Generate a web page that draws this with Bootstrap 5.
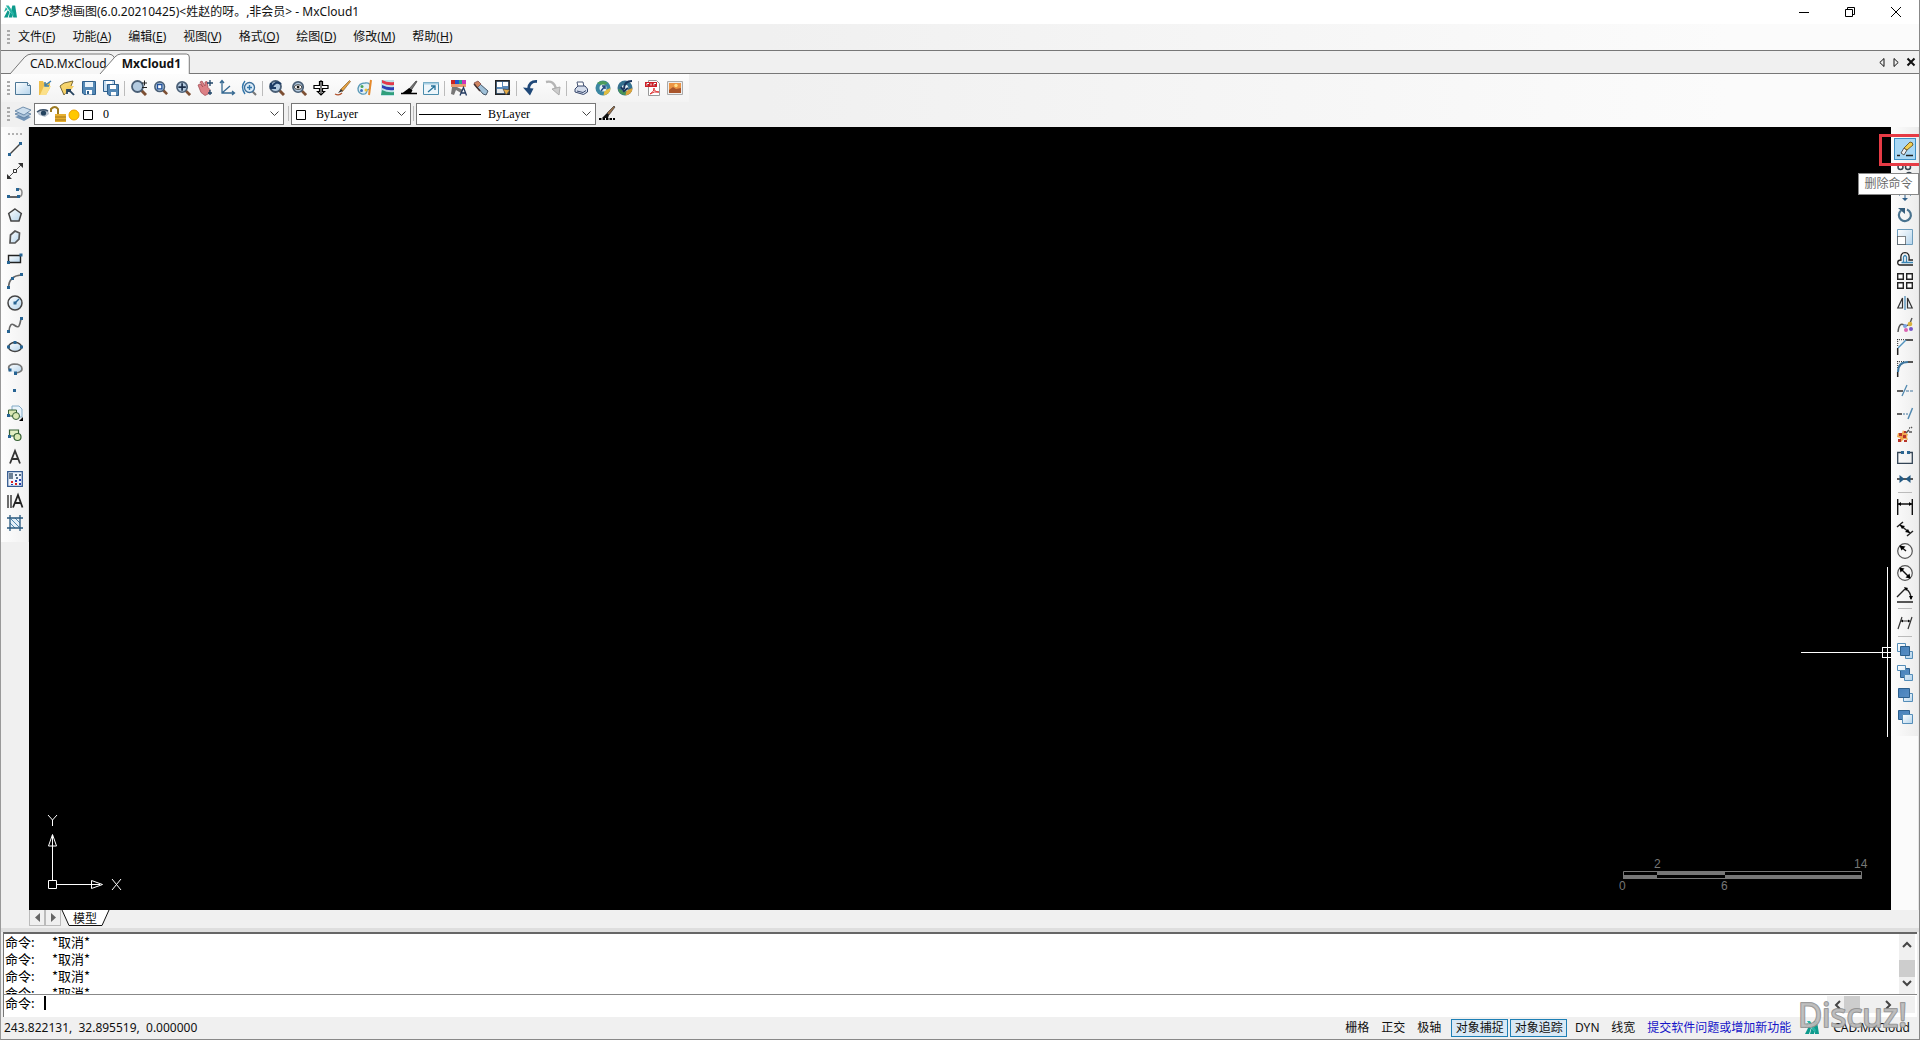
<!DOCTYPE html>
<html lang="zh-CN">
<head>
<meta charset="utf-8">
<meta name="viewport" content="width=device-width, initial-scale=1">
<title>CAD梦想画图 - MxCloud1</title>
<link href="https://cdn.jsdelivr.net/npm/bootstrap@5.3.0/dist/css/bootstrap.min.css" rel="stylesheet">
<style>
body{font:12px/16px "Noto Sans","Noto Sans CJK SC",sans-serif;color:#111;background:#f3f3f3}
button,select,input{font:inherit;color:inherit}
button{background:none;border:0;padding:0}
svg{display:block;flex:none;overflow:visible}
.app-shell{border-left:1px solid #999;border-right:1px solid #888;border-bottom:1px solid #888;background:#f0f0f0}
.title-row{height:24px;background:#fff;padding-left:3px}
.win-btn{width:46px;height:24px}
.menu-row{height:26px;background:linear-gradient(90deg,#f0f0f0,#f0f0f0 40%,#fbfbfb 90%);padding-left:6px}
.menu-row button{margin-right:17px;white-space:nowrap}
.grip-v{width:3px;height:14px;background:repeating-linear-gradient(#aaa 0 2px,transparent 2px 4px);flex:none}
.grip-h{width:14px;height:2px;background:repeating-linear-gradient(90deg,#b0b0b0 0 2px,transparent 2px 4px)}
.doc-row{height:24px;border-top:1px solid #777;border-bottom:1px solid #777;background:#f0f0f0;padding-left:9px}
.doc-tab{height:23px;padding:0 8px 0 20px;white-space:nowrap;line-height:25px}
.doc-tab svg{position:absolute;left:0;top:3px;width:100%;height:20px}
.doc-tab span{position:relative}
.doc-tab.front{margin-left:-15px;padding:0 8px 0 22px}
.bars{background:linear-gradient(90deg,#f0f0f0,#f0f0f0 40%,#fbfbfb 90%)}
.bar1{height:28px;width:688px;background:linear-gradient(#fdfdfd,#f3f3f3)}
.bar2{height:25px;padding-bottom:2px}
.bar1,.bar2{padding-left:6px}
.grip-v + .tool{margin-left:2px}
.tool{width:22px;height:22px;display:flex;align-items:center;justify-content:center;flex:none}
.split{width:1px;height:15px;margin:0 2px;background:#bbb;flex:none}
.bar1 .split{margin-right:3px}
.split-h{height:1px;width:14px;margin:2px 0 3px;background:#bbb}
.combo{height:22px;background:#fff;border:1px solid #777}
.combo select{appearance:none;width:100%;height:20px;border:0;background:none;font:12px/20px "Liberation Serif","Noto Sans CJK SC",serif;outline:0;padding:0;color:#000}
.combo .arrow{position:absolute;right:4px;top:7px;pointer-events:none}
.combo .deco{position:absolute;left:2px;top:2px;pointer-events:none}
.combo-layer{width:250px}.combo-layer select{padding-left:68px}
.combo-color{width:120px}.combo-color select{padding-left:24px}
.combo-line{width:180px}.combo-line select{padding-left:71px}
.dock{width:28px;background:linear-gradient(90deg,#fdfdfd,#f1f1f1);align-self:flex-start;padding:6px 0 8px}
.dock-left{border-right:1px solid #ddd}
.dock-left .grip-h{margin-bottom:3px}
.dock-col-r{width:28px;background:#fbfbfb;border-right:1px solid #e6e6e6}
.dock-r{width:27px;background:linear-gradient(90deg,#fdfdfd,#ededed);padding:11px 0 8px}
.tool.hot{background:#a9d8f5;outline:1px solid #3d8fc4;outline-offset:-1px}
.drawing{background:#000;overflow:hidden}
.ucs{position:absolute;left:18px;bottom:17px}
.ruler{position:absolute;right:20px;bottom:17px}
.cross{position:absolute;right:0;bottom:173px}
.model-row{height:18px;padding-left:28px}
.nav-sq{width:16px;height:16px;border:1px solid #bbb;border-top:0;display:flex;align-items:center;justify-content:center}
.model-tab{width:48px;height:16px;line-height:18px}
.model-tab svg{position:absolute;left:0;top:0}
.model-tab span{position:relative}
.bar-gap{height:4px;background:#dedede}
.console{margin:0 2px 0 2px;border:1px solid #777;border-top:2px solid #666;border-right:0;border-bottom:0;background:#fff;color:#000}
.console,.console input{font:13px/17px "Noto Sans CJK SC",sans-serif}
.console .log{height:61px;overflow:hidden;padding-left:1px;border-bottom:1px solid #888}
.console .log div{white-space:pre}
.log-text{margin-top:-1px}
.lab{display:inline-block;width:47px}
.entry{height:22px;padding-left:1px}
.entry label,.entry input{height:17px;line-height:15px}
.entry label{width:37px}
.entry input{border:0;outline:0;padding:0;background:none}
.caret{width:2px;height:14px;background:#000;margin:1px 0 0 2px}
.vscroll{width:16px;background:#f0f0f0;margin-right:2px}
.vscroll i{display:block;width:16px;height:17px;background:#cdcdcd}
.hscroll{width:88px;height:17px;background:#f0f0f0;margin:1px 2px 0 0}
.hscroll i{display:block;width:16px;height:17px;background:#cdcdcd}
.status{height:22px;padding:0 9px 0 3px;white-space:nowrap}
.mode{width:36px;height:18px;text-align:center}
.mode.on{width:57px;margin-right:2px;border:1px solid #1d7fb5;background:#d9e9f5}
.report{color:#1414c8;margin:0 12px 0 6px}
.stamp{position:absolute;right:14px;bottom:6px;pointer-events:none}
.frame-red{position:absolute;right:-3px;top:7px;width:43px;height:32px;border:3px solid #e63b45;pointer-events:none}
.tip{position:absolute;right:0;top:46px;width:61px;height:22px;background:#fff;border:1px solid #888;color:#6a6a6a;text-align:center;line-height:20px;white-space:nowrap;z-index:3}
</style>
<script src="https://cdn.jsdelivr.net/npm/bootstrap@5.3.0/dist/js/bootstrap.bundle.min.js"></script>
</head>
<body>
<svg width="0" height="0" class="position-absolute" aria-hidden="true">
<defs>
<linearGradient id="ice" x1="0" y1="0" x2="1" y2="1"><stop offset="0" stop-color="#fff"/><stop offset="1" stop-color="#b4d4ec"/></linearGradient>
<linearGradient id="sea" x1="0" y1="0" x2="1" y2="1"><stop offset="0" stop-color="#4580ba"/><stop offset="1" stop-color="#5a8fc4"/></linearGradient>
<symbol id="lens" viewBox="0 0 16 16"><path d="M10 10l5 5" stroke="#7d4f33" stroke-width="3"/><circle cx="6.500" cy="6.500" r="5.500" fill="#b4cbe0" stroke="#4a5f76" stroke-width="1.800"/></symbol>
<symbol id="logo" viewBox="0 0 14 14"><path d="M0 13L4 5l2 2-2 6zM5 13l1.500-6 2.500 3v3zM9 0h3l2 13h-4L8 4z" fill="#0e9a8c"/><path d="M2 0h3l6 9-1 3zM0 7l2-5 2 2z" fill="#25b3a4"/></symbol>
</defs>
</svg>
<div class="app-shell d-flex flex-column vh-100 position-relative overflow-hidden">
 <header class="title-row d-flex align-items-center flex-shrink-0">
  <svg width="13" height="14"><use href="#logo" width="13" height="14"/></svg>
  <span class="ms-1 flex-grow-1 text-truncate ps-1">CAD梦想画图(6.0.20210425)&lt;姓赵的呀。,非会员&gt; - MxCloud1</span>
  <button class="win-btn d-flex align-items-center justify-content-center" aria-label="最小化"><svg width="10" height="10" stroke="#000"><path d="M0 5.500h10"/></svg></button>
  <button class="win-btn d-flex align-items-center justify-content-center" aria-label="还原"><svg width="10" height="10" fill="none" stroke="#000"><path d="M.5 2.500h7v7h-7zM2.500 2.500v-2h7v7h-2"/></svg></button>
  <button class="win-btn d-flex align-items-center justify-content-center" aria-label="关闭"><svg width="10" height="10" stroke="#000"><path d="M0 0l10 10M10 0L0 10"/></svg></button>
 </header>
 <nav class="menu-row d-flex align-items-center flex-shrink-0">
  <span class="grip-v me-2"></span>
  <button>文件(<u>F</u>)</button><button>功能(<u>A</u>)</button><button>编辑(<u>E</u>)</button><button>视图(<u>V</u>)</button><button>格式(<u>O</u>)</button><button>绘图(<u>D</u>)</button><button>修改(<u>M</u>)</button><button>帮助(<u>H</u>)</button>
 </nav>
 <div class="doc-row d-flex flex-shrink-0">
  <button class="doc-tab position-relative"><svg viewBox="0 0 106 20" preserveAspectRatio="none"><path d="M0 20L15 3q3-3 7-3H100q4 0 6 4v16" fill="#f6f6f6" stroke="#777"/></svg><span>CAD.MxCloud</span></button>
  <button class="doc-tab front position-relative fw-bold"><svg viewBox="0 0 90 20" preserveAspectRatio="none"><path d="M0 20L15 3q3-3 6-3H87q3 0 3 3v17" fill="#fff" stroke="#777"/></svg><span>MxCloud1</span></button>
  <div class="ms-auto d-flex align-items-center gap-2 me-1">
   <button aria-label="上一个"><svg width="6" height="9" fill="none" stroke="#111"><path d="M5 .5v8L.8 4.500z"/></svg></button>
   <button aria-label="下一个"><svg width="6" height="9" fill="none" stroke="#111"><path d="M1 .5v8l4.200-4z"/></svg></button>
   <button aria-label="关闭文档"><svg width="8" height="8" stroke="#111" stroke-width="2"><path d="M.5.5l7 7M7.500.5l-7 7"/></svg></button>
  </div>
 </div>
 <div class="bars flex-shrink-0">
  <div class="bar1 d-flex align-items-center">
   <span class="grip-v"></span>
   <button class="tool" aria-label="新建"><svg width="16" height="14"><path d="M.5 1.500h12l3 3v9H.5z" fill="url(#ice)" stroke="#4c7796"/><path d="M12.500 1.500v3h3" fill="#fff" stroke="#4c7796"/></svg></button>
   <button class="tool" aria-label="打开"><svg width="16" height="16"><path d="M2 1h4l1 2h6v5L9 15H2z" fill="#eec04e"/><path d="M3 15L7 6h7l-5 9z" fill="#fbe08a"/><path d="M14 1L8 5.500M8 2v4h4" stroke="#3f7fae" stroke-width="1.500" fill="none"/></svg></button>
   <button class="tool" aria-label="打开云图"><svg width="16" height="16"><path d="M1 6l4-3 9-2-2 5-7 9z" fill="#f6d46c" stroke="#7b6a36"/><path d="M5 14l3-8h7l-3 4z" fill="#f3cd62"/><path d="M8 10q4 1 7 5M8 14v-4h4" stroke="#27445f" stroke-width="1.800" fill="none"/></svg></button>
   <button class="tool" aria-label="保存"><svg width="14" height="14"><path d="M.5.500h13v13H2l-1.500-1.500z" fill="#5488b5" stroke="#2d5f8d"/><path d="M3 1h8v5H3z" fill="#eaf3fa"/><path d="M4 9h6v4.500H4z" fill="#fff"/><path d="M5 10h2v3H5z" fill="#2d5f8d"/></svg></button>
   <button class="tool" aria-label="另存为"><svg width="16" height="16"><path d="M.5.500h11v11H.5z" fill="#c5dcef" stroke="#2d5f8d"/><path d="M3 1h6v3H3z" fill="#fff"/><path d="M4.500 4.500h11v11H6l-1.500-1.500z" fill="#5488b5" stroke="#2d5f8d"/><path d="M7 5h6v4H7zM8 12h5v3.500H8z" fill="#fff"/></svg></button>
   <i class="split"></i>
   <button class="tool" aria-label="实时缩放"><svg width="16" height="16"><use href="#lens" width="16" height="16"/><path d="M11 3h5M13.500.500v5M11 7.500h5" stroke="#222"/></svg></button>
   <button class="tool" aria-label="窗口缩放"><svg width="14" height="14" viewBox="0 0 16 16"><use href="#lens" width="16" height="16"/><path d="M4 4h5v5H4z" fill="#fff" stroke="#1f4f9c" stroke-width="1.500"/></svg></button>
   <button class="tool" aria-label="范围缩放"><svg width="15" height="15" viewBox="0 0 16 16"><use href="#lens" width="16" height="16"/><path d="M6.500 2.500v8M2.500 6.500h8" stroke="#1b2e48" stroke-width="1.800"/></svg></button>
   <button class="tool" aria-label="平移"><svg width="16" height="16"><path d="M1 5l2-1 3 3-3-5 2-1 3 5V2l2-.5 1 6 2 2-1 4-4 2-4-3z" fill="#dc8085" stroke="#9d454d" stroke-width=".7"/><path d="M13 0v6M10 3h6M13 10v5M11 13h4" stroke="#204568" stroke-width="1.300"/></svg></button>
   <button class="tool" aria-label="坐标系"><svg width="16" height="16" fill="none" stroke="#356891" stroke-width="1.300"><path d="M3 1v12h12M3 13l8-7M1 3l2-2.500L5 3M13 11l2.500 2-2.500 2"/></svg></button>
   <button class="tool" aria-label="旋转视图"><svg width="16" height="16"><path d="M11 11l4 4" stroke="#777" stroke-width="2"/><circle cx="8.500" cy="7.500" r="5" fill="#dcecf8" stroke="#3b6e9a" stroke-width="1.300"/><path d="M4 1Q-1 7 4 14M6 7.500h5M8.500 5v5" fill="none" stroke="#3176aa" stroke-width="1.400"/></svg></button>
   <i class="split"></i>
   <button class="tool" aria-label="上一视图"><svg width="16" height="16"><use href="#lens" width="16" height="16"/><path d="M2 3v5h5M3 7Q7 0 12 4" fill="none" stroke="#1c3b64" stroke-width="2.200"/></svg></button>
   <button class="tool" aria-label="查看"><svg width="15" height="15" viewBox="0 0 16 16"><use href="#lens" width="16" height="16"/><ellipse cx="6.500" cy="6.500" rx="4" ry="2.500" fill="#fff" stroke="#333"/><circle cx="6.500" cy="6.500" r="1.500" fill="#111"/></svg></button>
   <button class="tool" aria-label="拾取点"><svg width="16" height="16"><path d="M6.500 1.500h3v4H15v3H9.500v3h2L8 15l-3.500-3.500h2v-3H1v-3h5.500z" fill="#fff" stroke="#000" stroke-width="1.200"/><path d="M8 0v14" stroke="#000"/></svg></button>
   <button class="tool" aria-label="画笔"><svg width="16" height="16"><path d="M14.500.500l-9 9 2 2 8-10z" fill="#e4a13f" stroke="#8a6030" stroke-width=".7"/><path d="M6 9l-3 4 5-2z" fill="#333"/><path d="M0 14q4 2 7-1" fill="none" stroke="#b0522d" stroke-width="1.300"/></svg></button>
   <button class="tool" aria-label="颜色"><svg width="16" height="16"><path d="M8 3Q14 2 13 8q-1 2-3 2 0 5-5 4Q1 13 1 8.500 2 3 8 3z" fill="#e3f0f6" stroke="#5c9bb8" stroke-width="1.400"/><circle cx="5" cy="6.500" r="1.500" fill="#4aa35a"/><circle cx="4.500" cy="10.500" r="1.500" fill="#3a6fc0"/><circle cx="9" cy="10" r="1.500" fill="#f0c23a"/><path d="M14 0l-2 15" stroke="#e5892c" stroke-width="2"/></svg></button>
   <button class="tool" aria-label="图层特性"><svg width="15" height="16"><path d="M1 0h13v16H1z" fill="#bfe3e8"/><path d="M2 0q6 3 12 2v3Q8 6 2 3z" fill="#e23a4a"/><path d="M2 5q6 3 12 2v3Q8 11 2 8z" fill="#2e3fb4"/><path d="M2 10q6 3 12 2v3H1z" fill="#2f9f7c"/></svg></button>
   <button class="tool" aria-label="线型"><svg width="16" height="16"><path d="M15 1L8 9l2 1.500 6-9z" fill="#777" stroke="#222" stroke-width=".6"/><path d="M8 9l-6 4.500h7l1.500-3zM0 13.500h16" stroke="#000" stroke-width="1.500"/></svg></button>
   <button class="tool" aria-label="全屏"><svg width="16" height="13"><path d="M.5.500h15v12H.5z" fill="#edf6fb" stroke="#4c8dac"/><path d="M.5.500h15v2H.5z" fill="#a7cfe3"/><path d="M5 10l7-6M8 4h4v4" fill="none" stroke="#28749c" stroke-width="1.300"/></svg></button>
   <i class="split"></i>
   <button class="tool" aria-label="文字颜色"><svg width="16" height="16"><path d="M0 0h4v4H0z" fill="#c22"/><path d="M4 0h4v4H4z" fill="#25c"/><path d="M8 0h3v4H8z" fill="#2a8"/><path d="M11 0h4v4h-4z" fill="#c3b"/><path d="M0 4h15v3H0z" fill="#e99a70"/><path d="M1 7h5l6 3-2 3-5-3-2 5-3-1z" fill="#777"/><path d="M9 15.500l3.500-8 3 8M10.500 13h4" fill="none" stroke="#223a60" stroke-width="1.300"/></svg></button>
   <button class="tool" aria-label="格式刷"><svg width="16" height="16"><path d="M7 4l8 7-2 4-3-1-6-7z" fill="#9fc0d8" stroke="#456"/><path d="M1 3l4-2 3 3-4 4z" fill="#d08560" stroke="#744" stroke-width=".7"/><path d="M7 11L1 4" stroke="#433" stroke-width="1.500"/></svg></button>
   <button class="tool" aria-label="特性"><svg width="16" height="16"><path d="M.7.700h13.500v13.500H.7z" fill="#5c8bba" stroke="#222" stroke-width="1.400"/><path d="M2 2h5v5H2zM8 2h5v4H8z" fill="#fff"/><path d="M2 9h7v4H2z" fill="#e8e8e8"/><path d="M8 9l7 1-4 5z" fill="#e7ad48" stroke="#333" stroke-width=".6"/></svg></button>
   <i class="split"></i>
   <button class="tool" aria-label="撤销"><svg width="16" height="16"><path d="M14 1.500Q6 1 5.500 9" fill="none" stroke="#1f4878" stroke-width="2.800"/><path d="M0 7.500l10.500 1-3.500 7z" fill="#1f4878"/></svg></button>
   <button class="tool" aria-label="重做"><svg width="16" height="16"><path d="M1 2Q9 0 11 9" fill="none" stroke="#b5b5b5" stroke-width="2.400"/><path d="M7 9l8-2-1 8z" fill="#ccc" stroke="#aaa"/></svg></button>
   <i class="split"></i>
   <button class="tool" aria-label="打印"><svg width="14" height="14"><path d="M3 1h6l1 5H4z" fill="#fff" stroke="#4b5977"/><path d="M1 8l3-3h7l2.500 3v3l-4 2.500L1 11z" fill="#d4dceb" stroke="#38486c"/><path d="M3 10l6 1.500 3-2" fill="none" stroke="#38486c"/></svg></button>
   <button class="tool" aria-label="上传"><svg width="16" height="16"><circle cx="8" cy="8" r="7.500" fill="#3c87a2"/><path d="M2 3Q8-1 13 3L8 6z" fill="#4c9c5c"/><path d="M15.500 8q0 6-7 7.500l1-5z" fill="#e2bd41"/><circle cx="8" cy="8" r="3.500" fill="#e5eff5"/><path d="M6 11l4-5M7 6h3v3" fill="none" stroke="#244c82" stroke-width="1.500"/></svg></button>
   <button class="tool" aria-label="下载"><svg width="16" height="16"><circle cx="8" cy="8" r="7.500" fill="#34708e"/><path d="M1 9q1 6 8 6V11z" fill="#499458"/><path d="M15.500 8q0 6-7 7.500l1-5z" fill="#dda339"/><circle cx="8" cy="8" r="3.300" fill="#eaf3f6"/><path d="M15 1Q7 1 7 9M4 7l3 4 4-3" fill="none" stroke="#18345c" stroke-width="2"/></svg></button>
   <i class="split"></i>
   <button class="tool" aria-label="导出PDF"><svg width="16" height="16"><path d="M3.500.500h8l3 3v12h-11z" fill="#fff" stroke="#999"/><path d="M0 2h12v5H0z" fill="#cd2028"/><path d="M2 5.500v-2h2M6 3.500v2M9 5.500v-2h2" stroke="#fff"/><path d="M5 14q5-3 4-6 0 4 5 4-5-1-9 2z" fill="none" stroke="#d33"/></svg></button>
   <button class="tool" aria-label="导出图片"><svg width="16" height="14"><path d="M.5.500h15v13H.5z" fill="#eee" stroke="#aaa"/><path d="M2 2h12v10H2z" fill="#eb9444"/><path d="M2 9l4-3 3 2 5-1v5H2z" fill="#a9552b"/><circle cx="9" cy="4.500" r="1.700" fill="#ffe08a"/></svg></button>
  </div>
  <div class="bar2 d-flex align-items-center">
   <span class="grip-v"></span>
   <button class="tool" aria-label="图层"><svg width="16" height="15"><path d="M0 11l8-3 8 3-7 4z" fill="#7394b6"/><path d="M0 8l8-3 8 3-7 4z" fill="#a9c1d8" stroke="#55799c" stroke-width=".8"/><path d="M0 5l8-4 8 3-7 5z" fill="#cddeed" stroke="#55799c" stroke-width=".8"/></svg></button>
   <div class="combo combo-layer position-relative">
    <svg class="deco" width="60" height="17"><path d="M0 6q5-5 11-2l1 4-4 3-6-2z" fill="#b9c3cf"/><path d="M0 6q5-4 11-1" fill="none" stroke="#3c526a" stroke-width="1.600"/><circle cx="6.500" cy="7" r="2.600" fill="#24435f"/><path d="M14 6V3q4-4 7 0v5" fill="none" stroke="#9c7a22" stroke-width="2"/><path d="M18 8h11v8H18z" fill="#e6af30"/><path d="M18 11h11M18 14h11" stroke="#a57616"/><circle cx="37" cy="9" r="5" fill="#ffc800" stroke="#eda000"/><path d="M46.500 4.500h9v9h-9z" fill="#fff" stroke="#000"/></svg>
    <select aria-label="图层列表"><option>0</option></select>
    <svg class="arrow" width="9" height="6" fill="none" stroke="#444"><path d="M.5.500l4 4 4-4"/></svg>
   </div>
   <i class="split ms-1"></i>
   <div class="combo combo-color position-relative">
    <svg class="deco" width="14" height="17"><path d="M2.500 4.500h9v9h-9z" fill="#fff" stroke="#000"/></svg>
    <select aria-label="颜色列表"><option>ByLayer</option></select>
    <svg class="arrow" width="9" height="6" fill="none" stroke="#444"><path d="M.5.500l4 4 4-4"/></svg>
   </div>
   <i class="split"></i>
   <div class="combo combo-line position-relative">
    <svg class="deco" width="64" height="17"><path d="M0 8.500h62" stroke="#000"/></svg>
    <select aria-label="线型列表"><option>ByLayer</option></select>
    <svg class="arrow" width="9" height="6" fill="none" stroke="#444"><path d="M.5.500l4 4 4-4"/></svg>
   </div>
   <button class="tool" aria-label="线型管理"><svg width="16" height="15"><path d="M15 0L8 7l2 2 6-8z" fill="#9a7048" stroke="#222" stroke-width=".6"/><path d="M8 7l-5 5h6l1-3z" fill="#111"/><path d="M0 13h16" stroke="#000" stroke-width="2" stroke-dasharray="2.500 1"/></svg></button>
  </div>
 </div>
 <main class="d-flex flex-grow-1 position-relative" style="min-height:0">
  <aside class="dock dock-left d-flex flex-column align-items-center flex-shrink-0" aria-label="绘图">
   <span class="grip-h flex-shrink-0"></span>
   <button class="tool" aria-label="直线"><svg width="16" height="16"><path d="M2 14L14 2" stroke="#444" stroke-width="1.500"/><path d="M1 12h3v3H1zM12 1h3v3h-3z" fill="#276493"/></svg></button>
   <button class="tool" aria-label="构造线"><svg width="16" height="16"><path d="M1 15L15 1" stroke="#555"/><path d="M0 16v-5l5 5zM16 0v5l-5-5z" fill="#333"/><path d="M6.500 6.500h3v3h-3z" fill="#fff" stroke="#333"/></svg></button>
   <button class="tool" aria-label="多段线"><svg width="16" height="16"><path d="M1 12h10" stroke="#333" stroke-width="1.500"/><path d="M10 4q5-1 5 3.500T11 12" fill="none" stroke="#888" stroke-width="1.500"/><path d="M0 10h3v3H0zM9 3h3v3H9zM10 10h3v3h-3z" fill="#276493"/></svg></button>
   <button class="tool" aria-label="正多边形"><svg width="14" height="14"><path d="M7 1l6.300 4.500L11 13H3L.7 5.500z" fill="url(#ice)" stroke="#444" stroke-width="1.500"/></svg></button>
   <button class="tool" aria-label="多边形"><svg width="14" height="14"><path d="M2.500 5L7 1l4.500 2-.5 6-4 4H2z" fill="url(#ice)" stroke="#555" stroke-width="1.700"/></svg></button>
   <button class="tool" aria-label="矩形"><svg width="16" height="12"><path d="M1.500 2.500h12v7h-12z" fill="url(#ice)" stroke="#222" stroke-width="1.400"/><path d="M0 8h3v3H0zM12.500.500h3v3h-3z" fill="#276493"/></svg></button>
   <button class="tool" aria-label="圆弧"><svg width="16" height="16"><path d="M1.500 14Q2 3 14 2" fill="none" stroke="#666" stroke-width="1.500"/><path d="M0 13h3v3H0zM4 4h3v3H4zM13 0h3v3h-3z" fill="#276493"/></svg></button>
   <button class="tool" aria-label="圆"><svg width="16" height="16"><circle cx="8" cy="8" r="7" fill="url(#ice)" stroke="#444" stroke-width="1.500"/><path d="M8 8l4-4" stroke="#276493" stroke-width="1.500"/><path d="M6.500 6.500h3v3h-3z" fill="#276493"/></svg></button>
   <button class="tool" aria-label="样条曲线"><svg width="16" height="16"><path d="M2 14Q3 5 7 8t5 1 2-7" fill="none" stroke="#666" stroke-width="1.600"/><path d="M0 13h3v3H0zM13 0h3v3h-3z" fill="#276493"/></svg></button>
   <button class="tool" aria-label="椭圆"><svg width="16" height="12"><ellipse cx="8" cy="6" rx="6.500" ry="4.500" fill="url(#ice)" stroke="#444" stroke-width="1.500"/><path d="M0 4.500h3v3H0zM13 4.500h3v3h-3zM6.500 0h3v3h-3z" fill="#276493"/></svg></button>
   <button class="tool" aria-label="椭圆弧"><svg width="16" height="13"><path d="M3 8Q-1 2 7 1q8 0 8 5 0 3-6 4" fill="url(#ice)" stroke="#777" stroke-width="1.700"/><path d="M1.500 5.500h3v3h-3zM7 8.500h3V12H7z" fill="#276493"/></svg></button>
   <button class="tool" aria-label="点"><svg width="4" height="4"><path d="M0 0h3v3H0z" fill="#276493"/></svg></button>
   <button class="tool" aria-label="创建块"><svg width="16" height="16"><path d="M5 1h7l3 3v8H5z" fill="#eaf4fb" stroke="#82aac6"/><path d="M1.500 5h8v6h-8z" fill="#dbe8b5" stroke="#356034"/><circle cx="9" cy="11" r="3.500" fill="#dbe8b5" stroke="#356034"/><path d="M0 9h3v3H0z" fill="#276493"/><path d="M16 12v4h-4z"/></svg></button>
   <button class="tool" aria-label="插入块"><svg width="14" height="14"><path d="M1.500 2h9v6h-9z" fill="#e4efc4" stroke="#356034" stroke-width="1.200"/><circle cx="9.500" cy="9" r="3.500" fill="#dbe8b5" stroke="#356034" stroke-width="1.200"/><path d="M0 7h3v3H0z" fill="#276493"/></svg></button>
   <button class="tool" aria-label="单行文字"><svg width="12" height="14" fill="none" stroke="#333" stroke-width="1.800"><path d="M1 13.500L6 1l5 12.500M2.500 9h7"/></svg></button>
   <button class="tool" aria-label="图案填充"><svg width="16" height="16"><path d="M.7.700h14.600v14.600H.7z" fill="#eef3fb" stroke="#345b91" stroke-width="1.300"/><path d="M3 2v6M5 2v6M8 4h2M12 4h2M9 7h2" stroke="#24415f" stroke-width="1.300"/><path d="M4 10h2v2H4zM8 12h2v2H8z" fill="#d22"/><path d="M8 9h2v2H8zM12 8h2v2h-2zM12 12h2v2h-2zM4 13h2v1H4z" fill="#253fb0"/></svg></button>
   <button class="tool" aria-label="多行文字"><svg width="16" height="14" fill="none" stroke="#222" stroke-width="1.800"><path d="M1 1v13M4 1v13" stroke-width="1.300"/><path d="M6 13.500L11 1l4.500 12.500M7.500 9h7"/></svg></button>
   <button class="tool" aria-label="面域"><svg width="16" height="16"><path d="M3 3h10v10H3z" fill="#e4eff7"/><path d="M4 4l8 8M3 8l5 5M8 3l5 5" stroke="#4f87b0"/><path d="M3 0v16M13 0v16M0 3h16M0 13h16" stroke="#28587e" stroke-width="1.300"/></svg></button>
  </aside>
  <section class="drawing flex-grow-1 position-relative">
   <svg class="ucs" width="80" height="78" fill="none" stroke="#fff"><path d="M1.500 65.500h8v8h-8zM5.500 65V20M10 69.500h38M5.500 19.500L1.500 31h8zM44.500 65.500v8l11-4zM45 69.500h8M1 0l4.500 5L10 0M5.500 5v6M65 64l9 11M74 64l-9 11"/></svg>
   <svg class="ruler" width="262" height="38" font-family="Liberation Sans,Arial,sans-serif" font-size="12" fill="#777"><path d="M14.500 16.500h238v7h-238z" fill="#000" stroke="#777"/><path d="M14 20h34v4H14zM48 16h68v4H48zM116 20h137v4H116z"/><text x="45" y="13">2</text><text x="245" y="13">14</text><text x="10" y="35">0</text><text x="112" y="35">6</text></svg>
   <svg class="cross" width="90" height="170" stroke="#fff" fill="none" shape-rendering="crispEdges"><path d="M0 85.500h90M86.500 0v170M81.500 80.500h10v10h-10z"/></svg>
  </section>
  <aside class="dock-col-r flex-shrink-0" aria-label="修改">
  <div class="dock-r d-flex flex-column align-items-center">
   <button class="tool hot" aria-label="删除"><svg width="16" height="16"><path d="M0 14.500h3M9 14.500h7" stroke="#222" stroke-width="1.500"/><path d="M4 12l3-5 3 2-3 5z" fill="#eee" stroke="#555"/><path d="M7 7l6-6q3 0 3 3l-6 5z" fill="#f1cf53" stroke="#76612a"/></svg></button>
   <button class="tool" aria-label="复制"><svg width="16" height="16" fill="none" stroke="#35434f" stroke-width="1.500"><circle cx="3.500" cy="4" r="2.500"/><circle cx="11" cy="4" r="2.500"/><circle cx="12" cy="12" r="2.500"/></svg></button>
   <button class="tool" aria-label="移动"><svg width="16" height="16"><path d="M8 0l3 3H5zM8 16l3-3H5zM0 8l3-3v6zM16 8l-3-3v6z" fill="#32618a"/><path d="M8 2v12M2 8h12" stroke="#32618a"/></svg></button>
   <button class="tool" aria-label="旋转"><svg width="16" height="16"><path d="M10 2.500a6 6 0 1 1-6 1" fill="none" stroke="#4a738f" stroke-width="2.200"/><path d="M1 1h7v6z" fill="#355d7c"/></svg></button>
   <button class="tool" aria-label="缩放"><svg width="16" height="16"><path d="M.5.500h15v15H.5z" fill="url(#ice)" stroke="#6d9cbc"/><path d="M.5 7.500h8v8h-8z" fill="#fff" stroke="#111" stroke-dasharray="1 1"/></svg></button>
   <button class="tool" aria-label="偏移"><svg width="16" height="14" fill="none"><path d="M16 13H3Q.7 13 .7 10.500T4 8Q3 .7 8 .7T12 8h4" stroke="#222" stroke-width="1.300"/><path d="M16 10.500H4.500M6.500 10V5Q8 2 9.500 5v5" stroke="#3b86b5" stroke-width="1.300"/></svg></button>
   <button class="tool" aria-label="阵列"><svg width="16" height="16" fill="#fff" stroke="#222" stroke-width="1.400"><path d="M.7.700h5.600v5.600H.7zM9.700.700h5.600v5.600H9.700zM.7 9.700h5.600v5.600H.7zM9.700 9.700h5.600v5.600H9.700z"/></svg></button>
   <button class="tool" aria-label="镜像"><svg width="16" height="14" fill="#eef4f8" stroke="#333" stroke-width="1.200"><path d="M5.500 2v10H.8zM10.500 2v10h4.700z"/><path d="M8 0v14" stroke="#3c83b2"/></svg></button>
   <button class="tool" aria-label="样条编辑"><svg width="16" height="16"><path d="M1 15Q2 5 7 8t8-7" fill="none" stroke="#555" stroke-width="1.400"/><circle cx="8" cy="9" r="2" fill="#7ba3de"/><circle cx="13" cy="7" r="2.300" fill="#d9b23d"/><circle cx="9" cy="13" r="2" fill="#d965b2"/><circle cx="14" cy="12" r="2" fill="#7658c6"/></svg></button>
   <button class="tool" aria-label="倒角"><svg width="16" height="16" fill="none"><path d="M0 .7h8M.7 0v8" stroke="#222" stroke-dasharray="1 1"/><path d="M.7 16V9M8 1h8" stroke="#222" stroke-width="1.500"/><path d="M1 9l8-8" stroke="#5393be" stroke-width="1.500"/></svg></button>
   <button class="tool" aria-label="圆角"><svg width="16" height="16" fill="none"><path d="M0 .7h8M.7 0v8" stroke="#222" stroke-dasharray="1 1"/><path d="M.7 16v-5M11 1h5" stroke="#222" stroke-width="1.500"/><path d="M1 11Q1 1 11 1" stroke="#3d769f" stroke-width="2"/></svg></button>
   <button class="tool" aria-label="修剪"><svg width="16" height="14"><path d="M0 7h6" stroke="#222" stroke-width="1.400"/><path d="M9 7h7" stroke="#42759d" stroke-dasharray="3 1"/><path d="M5 12L10 1" stroke="#5189b0" stroke-width="1.300"/></svg></button>
   <button class="tool" aria-label="延伸"><svg width="16" height="14"><path d="M0 8h5" stroke="#222" stroke-width="1.400"/><path d="M6 8h6" stroke="#42759d" stroke-dasharray="2 1"/><path d="M11 13L15.500 2" stroke="#5189b0" stroke-width="1.500"/></svg></button>
   <button class="tool" aria-label="分解"><svg width="16" height="16"><path d="M1 6h4l1-3 2 3 3 1-1 3 1 3-4-1-3 3-1-4-3-1z" fill="#f0a850"/><path d="M2 6h3v3H2zM6 8h3v3H6zM1 12h3v3H1zM7 4h2v2H7zM7 13h3v2H7z" fill="#b8352a"/><path d="M9 6l3-3M12 5h3M14 1l1-1M12 1h1" stroke="#555" stroke-width="1.500"/></svg></button>
   <button class="tool" aria-label="打断"><svg width="16" height="14"><path d="M5 2.500H.7v10.800h14.600V2.500H11" fill="none" stroke="#345" stroke-width="1.300"/><path d="M4 1h3v3H4zM10 1h3v3h-3z" fill="#2b6591"/></svg></button>
   <button class="tool" aria-label="合并"><svg width="16" height="10"><path d="M0 5h16" stroke="#222" stroke-width="1.500"/><path d="M2.500 1l5 4-5 4zM13.500 1l-5 4 5 4z" fill="#255b84"/></svg></button>
   <i class="split-h"></i>
   <button class="tool" aria-label="线性标注"><svg width="16" height="16"><path d="M.7 0v16M15.300 0v16M1 5h14" stroke="#111" stroke-width="1.400"/><path d="M1 5l3-2v4zM15 5l-3-2v4z"/></svg></button>
   <button class="tool" aria-label="对齐标注"><svg width="16" height="16"><path d="M0 6l6-5M10 15l6-5M3 4l10 8" stroke="#222" stroke-width="1.500"/><path d="M3 4l5 1-3 3zM13 12l-5-1 3-3z"/></svg></button>
   <button class="tool" aria-label="半径标注"><svg width="16" height="16"><circle cx="8" cy="8" r="7.300" fill="#f7f7f7" stroke="#555" stroke-width="1.200"/><path d="M3 3l6 5" stroke="#111" stroke-width="1.400"/><path d="M2.500 2.500l6 1-4 4z"/></svg></button>
   <button class="tool" aria-label="直径标注"><svg width="16" height="16"><circle cx="8" cy="8" r="7.300" fill="#f7f7f7" stroke="#555" stroke-width="1.200"/><path d="M3 3l10 10" stroke="#111" stroke-width="1.400"/><path d="M2.500 2.500l5 1-4 4zM13.500 13.500l-5-1 4-4z"/></svg></button>
   <button class="tool" aria-label="角度标注"><svg width="16" height="16"><path d="M0 15h16M0 10l8-8M9 2q5 3 5 10" fill="none" stroke="#222" stroke-width="1.400"/><path d="M7 0l4 1-2 3zM14 13l-2-4h4z"/></svg></button>
   <i class="split-h"></i>
   <button class="tool" aria-label="编辑标注"><svg width="16" height="14"><path d="M1 13L5 1M11 13L15 1M4 5h9" fill="none" stroke="#333" stroke-width="1.200"/><path d="M4 5l2-1.500v3zM13 5l-2-1.500v3z"/></svg></button>
   <i class="split-h"></i>
   <button class="tool" aria-label="置前"><svg width="16" height="16"><path d="M.5.500h8v8h-8zM8.500 8.500h7v7h-7z" fill="url(#ice)" stroke="#548db8"/><path d="M3.500 3.500h9v9h-9z" fill="url(#sea)" stroke="#2c5f8d"/></svg></button>
   <button class="tool" aria-label="置后"><svg width="16" height="16"><path d="M3.500 3.500h9v9h-9z" fill="url(#sea)" stroke="#2c5f8d"/><path d="M.5.500h8v5h-8zM7.500 9.500h8v6h-8z" fill="url(#ice)" stroke="#548db8"/></svg></button>
   <button class="tool" aria-label="置于上方"><svg width="16" height="14"><path d="M6.500 5.500h9v8h-9z" fill="url(#ice)" stroke="#548db8"/><path d="M1.500.500h11v9h-11z" fill="url(#sea)" stroke="#2c5f8d"/></svg></button>
   <button class="tool" aria-label="置于下方"><svg width="16" height="14"><path d="M1.500.500h11v9h-11z" fill="url(#sea)" stroke="#2c5f8d"/><path d="M5.500 4.500h10v9h-10z" fill="url(#ice)" stroke="#548db8"/></svg></button>
  </div>
  </aside>
  <div class="frame-red"></div>
  <div class="tip" role="tooltip">删除命令</div>
 </main>
 <div class="model-row d-flex flex-shrink-0">
  <button class="nav-sq" aria-label="向左"><svg width="5" height="9" fill="#666"><path d="M5 0v9L0 4.500z"/></svg></button>
  <button class="nav-sq" aria-label="向右"><svg width="5" height="9" fill="#666"><path d="M0 0v9l5-4.500z"/></svg></button>
  <button class="model-tab position-relative"><svg width="48" height="16"><path d="M1 0l7 15.500h33L48 0" fill="#fff" stroke="#111"/></svg><span>模型</span></button>
 </div>
 <div class="bar-gap flex-shrink-0"></div>
 <section class="console flex-shrink-0" aria-label="命令行">
  <div class="log d-flex">
   <div class="log-text flex-grow-1"><div><span class="lab">命令:</span>*取消*</div><div><span class="lab">命令:</span>*取消*</div><div><span class="lab">命令:</span>*取消*</div><div><span class="lab">命令:</span>*取消*</div></div>
   <div class="vscroll d-flex flex-column align-items-center justify-content-between py-1">
    <svg class="mt-1" width="8" height="6" fill="none" stroke="#444" stroke-width="2"><path d="M0 5l4-4 4 4"/></svg><i class="mt-2"></i><svg class="mb-1" width="8" height="6" fill="none" stroke="#444" stroke-width="2"><path d="M0 1l4 4 4-4"/></svg>
   </div>
  </div>
  <div class="entry d-flex align-items-start"><label for="cmd">命令:</label><span class="caret"></span><input id="cmd" class="flex-grow-1" type="text">
   <div class="hscroll d-flex align-items-center ps-2">
    <svg width="5" height="8" fill="none" stroke="#444" stroke-width="2"><path d="M5 0L1 4l4 4"/></svg><i class="ms-1"></i><svg class="ms-auto me-4" width="5" height="8" fill="none" stroke="#444" stroke-width="2"><path d="M0 0l4 4-4 4"/></svg>
   </div>
  </div>
 </section>
 <footer class="status d-flex align-items-center flex-shrink-0">
  <span class="me-auto" style="white-space:pre">243.822131,  32.895519,  0.000000</span>
  <button class="mode">栅格</button><button class="mode">正交</button><button class="mode">极轴</button><button class="mode on ms-1">对象捕捉</button><button class="mode on">对象追踪</button><button class="mode">DYN</button><button class="mode">线宽</button>
  <a href="#" class="report text-decoration-none">提交软件问题或增加新功能</a>
  <svg width="18" height="14"><use href="#logo" width="18" height="14"/></svg><span class="ms-2 ps-1">CAD.MxCloud</span>
 </footer>
 <svg class="stamp" width="108" height="36" aria-hidden="true"><text x="1" y="30" font-family="Noto Sans,sans-serif" font-size="33" fill="#bdbdbd" fill-opacity=".9" stroke="#8d8d8d" stroke-width="2" stroke-opacity=".9" paint-order="stroke" stroke-linejoin="round">Discuz!</text></svg>
</div>
</body>
</html>
